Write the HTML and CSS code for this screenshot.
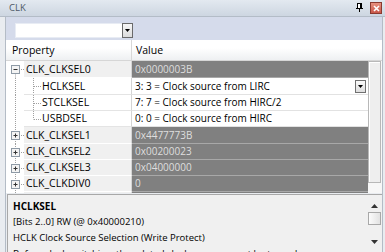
FILE: index.html
```html
<!DOCTYPE html>
<html>
<head>
<meta charset="utf-8">
<link rel="stylesheet" href="styles.css">
</head>
<body>
<div class="win">
  <div class="title">
    <span class="title-text">CLK</span>
    <span class="pin"><svg width="7" height="9" viewBox="0 0 7 9"><rect x="1.5" y="0.5" width="4" height="5" fill="#fff" stroke="#000"/><rect x="4" y="1" width="1" height="4" fill="#000"/><rect x="0" y="5" width="7" height="1" fill="#000"/><rect x="3" y="6" width="1" height="3" fill="#000"/></svg></span>
    <span class="close"><svg width="7" height="7" viewBox="0 0 7 7"><path d="M1 1L6 6M6 1L1 6" stroke="#fff" stroke-width="1.6"/></svg></span>
  </div>
  <div class="frame">
    <div class="toolbar">
      <div class="combo">
        <span class="combo-field"></span>
        <span class="combo-btn"><svg width="5" height="3" viewBox="0 0 5 3"><path d="M0 0H5L2.5 3Z" fill="#000"/></svg></span>
      </div>
    </div>
    <div class="header">
      <div class="h-prop">Property</div>
      <div class="h-val">Value</div>
    </div>
    <div class="gridarea">
      <div class="rows">
        <div class="row top tall">
          <svg class="gut" width="18" height="17" viewBox="0 0 18 17"><path d="M9.5 8.5V17M13 8.5H18" stroke="#a0a0a0" stroke-dasharray="1 1"/><rect x="5.5" y="4.5" width="8" height="8" fill="#f4f4f4" stroke="#8e9aa6"/><path d="M7.5 8.5H11.5" stroke="#333"/></svg>
          <div class="lab">CLK_CLKSEL0</div>
          <div class="val dark">0x0000003B</div>
        </div>
        <div class="row child tall">
          <svg class="gut" width="18" height="17" viewBox="0 0 18 17"><path d="M9.5 0V17" stroke="#a0a0a0" stroke-dasharray="1 1"/></svg>
          <div class="lab"><svg class="ind" width="18" height="17" viewBox="0 0 18 17"><path d="M9.5 0V17M10 8.5H17" stroke="#a0a0a0" stroke-dasharray="1 1"/></svg>HCLKSEL</div>
          <div class="val edit">3: 3 = Clock source from LIRC<span class="dd"><svg width="5" height="3" viewBox="0 0 5 3"><path d="M0 0H5L2.5 3Z" fill="#000"/></svg></span></div>
        </div>
        <div class="row child">
          <svg class="gut" width="18" height="16" viewBox="0 0 18 16"><path d="M9.5 0V16" stroke="#a0a0a0" stroke-dasharray="1 1"/></svg>
          <div class="lab"><svg class="ind" width="18" height="16" viewBox="0 0 18 16"><path d="M9.5 0V16M10 8.5H17" stroke="#a0a0a0" stroke-dasharray="1 1"/></svg>STCLKSEL</div>
          <div class="val">7: 7 = Clock source from HIRC/2</div>
        </div>
        <div class="row child">
          <svg class="gut" width="18" height="16" viewBox="0 0 18 16"><path d="M9.5 0V16" stroke="#a0a0a0" stroke-dasharray="1 1"/></svg>
          <div class="lab"><svg class="ind" width="18" height="16" viewBox="0 0 18 16"><path d="M9.5 0V8.5M10 8.5H17" stroke="#a0a0a0" stroke-dasharray="1 1"/></svg>USBDSEL</div>
          <div class="val">0: 0 = Clock source from HIRC</div>
        </div>
        <div class="row top tall">
          <svg class="gut" width="18" height="17" viewBox="0 0 18 17"><path d="M9.5 0V17M13 8.5H18" stroke="#a0a0a0" stroke-dasharray="1 1"/><rect x="5.5" y="4.5" width="8" height="8" fill="#f4f4f4" stroke="#8e9aa6"/><path d="M7.5 8.5H11.5M9.5 6.5V10.5" stroke="#333"/></svg>
          <div class="lab">CLK_CLKSEL1</div>
          <div class="val dark">0x4477773B</div>
        </div>
        <div class="row top">
          <svg class="gut" width="18" height="16" viewBox="0 0 18 16"><path d="M9.5 0V16M13 8.5H18" stroke="#a0a0a0" stroke-dasharray="1 1"/><rect x="5.5" y="4.5" width="8" height="8" fill="#f4f4f4" stroke="#8e9aa6"/><path d="M7.5 8.5H11.5M9.5 6.5V10.5" stroke="#333"/></svg>
          <div class="lab">CLK_CLKSEL2</div>
          <div class="val dark">0x00200023</div>
        </div>
        <div class="row top">
          <svg class="gut" width="18" height="16" viewBox="0 0 18 16"><path d="M9.5 0V16M13 8.5H18" stroke="#a0a0a0" stroke-dasharray="1 1"/><rect x="5.5" y="4.5" width="8" height="8" fill="#f4f4f4" stroke="#8e9aa6"/><path d="M7.5 8.5H11.5M9.5 6.5V10.5" stroke="#333"/></svg>
          <div class="lab">CLK_CLKSEL3</div>
          <div class="val dark">0x04000000</div>
        </div>
        <div class="row top">
          <svg class="gut" width="18" height="16" viewBox="0 0 18 16"><path d="M9.5 0V16M13 8.5H18" stroke="#a0a0a0" stroke-dasharray="1 1"/><rect x="5.5" y="4.5" width="8" height="8" fill="#f4f4f4" stroke="#8e9aa6"/><path d="M7.5 8.5H11.5M9.5 6.5V10.5" stroke="#333"/></svg>
          <div class="lab">CLK_CLKDIV0</div>
          <div class="val dark">0</div>
        </div>
        <div class="row top">
          <svg class="gut" width="18" height="16" viewBox="0 0 18 16"><path d="M9.5 0V16" stroke="#a0a0a0" stroke-dasharray="1 1"/></svg>
          <div class="lab"></div>
          <div class="val dark"></div>
        </div>
      </div>
      <div class="vscroll"><div class="vthumb"></div></div>
    </div>
    <div class="desc">
      <div class="desc-text">
        <div class="d-name">HCLKSEL</div>
        <div class="d-line">[Bits 2..0] RW (@ 0x40000210)</div>
        <div class="d-line">HCLK Clock Source Selection (Write Protect)</div>
        <div class="d-line">Before clock switching, the related clock sources must be turned on.</div>
      </div>
      <div class="desc-scroll">
        <svg width="7" height="4" viewBox="0 0 7 4"><path d="M0 4H7L3.5 0Z" fill="#333"/></svg>
        <div class="dthumb"></div>
        <div class="dspace"></div>
        <svg width="7" height="4" viewBox="0 0 7 4"><path d="M0 0H7L3.5 4Z" fill="#333"/></svg>
      </div>
    </div>
  </div>
</div>
</body>
</html>
```
FILE: styles.css
```css
* { box-sizing: border-box; }
html, body { margin: 0; padding: 0; }
body {
  font-family: "Open Sans", "Noto Sans", sans-serif;
  font-size: 10px;
  color: #000;
  background: #eceef2;
}
.win {
  width: 385px;
  height: 252px;
  overflow: hidden;
  display: flex;
  flex-direction: column;
  background: #e9ecf0;
}
.title {
  height: 17px;
  flex: none;
  display: flex;
  align-items: center;
  background: linear-gradient(#e3e9f0, #cdd6e1);
  border-bottom: 1px solid #b3bcc7;
  padding-left: 9px;
  padding-right: 3px;
}
.title-text {
  color: #4d5866;
  font-size: 9.5px;
  flex: 1;
  line-height: 16px;
}
.pin { display: flex; margin-right: 7px; margin-top: -1px; }
.close {
  width: 12px;
  height: 12px;
  background: linear-gradient(#e6917f, #c9574a);
  border: 1px solid #8a3a30;
  display: flex;
  align-items: center;
  justify-content: center;
}
.frame {
  flex: 1;
  display: flex;
  flex-direction: column;
  margin-left: 5px;
  margin-right: 2px;
  border-left: 1px solid #b4bcc6;
  border-right: 1px solid #b4bcc6;
  min-height: 0;
}
.toolbar {
  height: 23px;
  flex: none;
  background: #d5dbeb;
  padding: 6px 0 0 9px;
}
.combo {
  width: 118px;
  height: 15px;
  display: flex;
  background: #fff;
  border: 1px solid #e8ecf4;
}
.combo-field { flex: 1; }
.combo-btn {
  width: 11px;
  border: 1px solid #6a6a6a;
  background: linear-gradient(#f6f6f6, #dcdcdc);
  display: flex;
  align-items: center;
  justify-content: center;
  margin: -1px -1px -1px 0;
}
.header {
  height: 21px;
  flex: none;
  display: flex;
  background: linear-gradient(#ffffff 40%, #eef0f2);
  border-bottom: 1px solid #d6d6d6;
  line-height: 20px;
  font-size: 10.5px;
}
.h-prop {
  width: 126px;
  padding-left: 6px;
  border-right: 1px solid #d8d8d8;
}
.h-val { padding-left: 4px; }
.gridarea {
  height: 132px;
  flex: none;
  display: flex;
  overflow: hidden;
  background: #fff;
}
.rows {
  width: 362px;
  display: flex;
  flex-direction: column;
  overflow: hidden;
}
.row {
  height: 16px;
  flex: none;
  display: flex;
  line-height: 15px;
  background: #fff;
}
.row.tall { height: 17px; line-height: 16px; }
.gut { flex: none; display: block; }
.lab {
  width: 108px;
  flex: none;
  display: flex;
  padding-left: 2px;
  border-bottom: 1px solid #fff;
  border-right: 1px solid #d4d4d4;
  white-space: nowrap;
  overflow: hidden;
  font-size: 10.5px;
}
.row.top .lab { background: #f0f0f0; }
.row.child .lab { padding-left: 0; border-bottom-color: #e4e4e4; }
.ind { flex: none; display: block; }
.val {
  flex: 1;
  padding-left: 3px;
  border-bottom: 1px solid #e2e2e2;
  white-space: nowrap;
  display: flex;
  align-items: flex-start;
}
.val.dark {
  background: #808080;
  color: #dedede;
  border-bottom-color: #a8a8a8;
}
.dd {
  margin-left: auto;
  margin-right: 2px;
  margin-top: 2px;
  width: 11px;
  height: 13px;
  border: 1px solid #707070;
  background: linear-gradient(#fafafa, #dedede);
  display: flex;
  align-items: center;
  justify-content: center;
}
.vscroll {
  width: 14px;
  flex: none;
  background: #f7f7f7;
  padding: 0 1px 10px 0;
  display: flex;
}
.vthumb {
  flex: 1;
  border: 1px solid #b8b8b8;
  background: #eeeeee;
  box-shadow: inset 1px 1px 0 #fff;
}
.desc {
  flex: 1;
  display: flex;
  margin-left: 1px;
  margin-top: 1px;
  border-top: 1px solid #a8a8a8;
  border-left: 1px solid #a8a8a8;
  background: #f0f0f0;
  min-height: 0;
  overflow: hidden;
}
.desc-text {
  flex: 1;
  padding: 3px 0 0 5px;
  line-height: 16px;
  font-size: 9.5px;
  white-space: nowrap;
  overflow: hidden;
}
.d-name { font-weight: bold; font-size: 10px; }
.desc-scroll {
  width: 13px;
  flex: none;
  display: flex;
  flex-direction: column;
  align-items: center;
  padding-top: 9px;
  margin-right: 1px;
}
.dthumb {
  width: 13px;
  height: 13px;
  margin-top: 4px;
  border: 1px solid #a8a8a8;
  background: linear-gradient(90deg, #fbfbfb, #e2e2e2);
  flex: none;
}
.dspace { height: 15px; flex: none; }
```
